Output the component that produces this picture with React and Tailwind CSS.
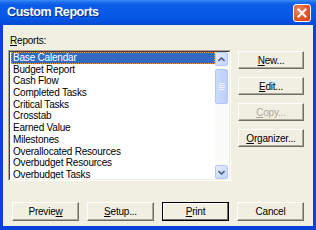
import React from "react";

const reports = [
  "Base Calendar",
  "Budget Report",
  "Cash Flow",
  "Completed Tasks",
  "Critical Tasks",
  "Crosstab",
  "Earned Value",
  "Milestones",
  "Overallocated Resources",
  "Overbudget Resources",
  "Overbudget Tasks",
];

export default function App() {
  return (
    <div className="w-[316px] h-[230px] flex flex-col bg-[#0842d8] font-['Liberation_Sans',Arial,sans-serif] text-[10px] tracking-[-0.2px] text-black overflow-hidden">
      {/* TITLE BAR */}
      <div className="h-[25px] flex items-center pl-[7px] pr-[5px] bg-[linear-gradient(180deg,#3b8cf5_0px,#1f70ee_2px,#0a5ce8_5px,#0758e6_18px,#0648d6_25px)]">
        <span className="flex-1 text-white font-bold text-[12.5px] tracking-[-0.4px] [text-shadow:1px_1px_#0a2a8a]">
          Custom Reports
        </span>
        <CloseBtn />
      </div>

      {/* BODY */}
      <div className="flex-1 mx-[3px] mb-[4px] bg-[#f1efe2] pl-[5px] pt-[10px]">
        <div className="h-[12px] leading-[12px] pl-[2px]">
          <u>R</u>eports:
        </div>

        <div className="flex mt-[3px]">
          <ListBox />
          <div className="ml-[7px] mt-[1px] flex flex-col gap-[8px]">
            <Btn w="w-[66px]" h="h-[18px]"><u>N</u>ew...</Btn>
            <Btn w="w-[66px]" h="h-[18px]"><u>E</u>dit...</Btn>
            <Btn w="w-[66px]" h="h-[18px]" disabled><u>C</u>opy...</Btn>
            <Btn w="w-[66px]" h="h-[18px]"><u>O</u>rganizer...</Btn>
          </div>
        </div>

        <div className="flex gap-[8px] mt-[21px] ml-[4px]">
          <Btn w="w-[67px]" h="h-[19px]">Previe<u>w</u></Btn>
          <Btn w="w-[67px]" h="h-[19px]"><u>S</u>etup...</Btn>
          <Btn w="w-[67px]" h="h-[19px]" def><u>P</u>rint</Btn>
          <Btn w="w-[67px]" h="h-[19px]">Cancel</Btn>
        </div>
      </div>
    </div>
  );
}

/* ================== UI HELPERS ================== */

function CloseBtn() {
  return (
    <div className="w-[18px] h-[18px] mt-[1px] rounded-[3px] border border-white bg-[radial-gradient(circle_at_30%_30%,#f08a5f,#e0562c_55%,#c8401c)] flex items-center justify-center">
      <svg width="10" height="10" viewBox="0 0 10 10">
        <path d="M1.5 1.5 L8.5 8.5 M8.5 1.5 L1.5 8.5" stroke="white" strokeWidth="2" strokeLinecap="square" />
      </svg>
    </div>
  );
}

function ListBox() {
  return (
    <div className="w-[223px] h-[131px] border border-t-[#aca899] border-l-[#aca899] border-r-white border-b-white">
      <div className="w-full h-full border border-t-[#404040] border-l-[#404040] border-r-[#f1efe2] border-b-[#f1efe2] bg-white flex">
        <div className="flex-1 pl-[1px] overflow-hidden">
          {reports.map((r, i) => (
            <div
              key={r}
              className={
                i === 0
                  ? "h-[11.7px] leading-[11.7px] pl-[2px] bg-[#316ac5] text-white outline outline-1 outline-dotted outline-[#e0a040] -outline-offset-1"
                  : "h-[11.7px] leading-[11.7px] pl-[2px] whitespace-nowrap"
              }
            >
              {r}
            </div>
          ))}
        </div>
        <ScrollBar />
      </div>
    </div>
  );
}

function ScrollBar() {
  return (
    <div className="w-[14px] h-full bg-[#fbfbf8] flex flex-col pr-[1px]">
      <Arrow up />
      <div className="mt-[3px] h-[35px] rounded-[2px] border border-[#b4c8f6] bg-[linear-gradient(90deg,#cbdafc,#bccffa)] flex flex-col items-center justify-center gap-[1px]">
        <div className="w-[6px] h-[1px] bg-[#eef3ff]" />
        <div className="w-[6px] h-[1px] bg-[#eef3ff]" />
        <div className="w-[6px] h-[1px] bg-[#eef3ff]" />
        <div className="w-[6px] h-[1px] bg-[#eef3ff]" />
      </div>
      <div className="flex-1" />
      <Arrow />
    </div>
  );
}

function Arrow({ up }) {
  return (
    <div className="h-[14px] rounded-[2px] border border-[#b4c8f6] bg-[linear-gradient(135deg,#e4ecfe,#c1d3fb)] flex items-center justify-center">
      <svg width="7" height="5" viewBox="0 0 7 5">
        <path
          d={up ? "M0.5 4 L3.5 1 L6.5 4" : "M0.5 1 L3.5 4 L6.5 1"}
          stroke="#4d6185"
          strokeWidth="1.6"
          fill="none"
        />
      </svg>
    </div>
  );
}

function Btn({ children, w, h, disabled, def }) {
  const base =
    "flex items-center justify-center bg-[#f1efe2] whitespace-nowrap " + w + " " + h;
  if (def) {
    return (
      <div className={base + " border border-black shadow-[inset_-1px_-1px_#716f64,inset_1px_1px_white]"}>
        {children}
      </div>
    );
  }
  return (
    <div
      className={
        base +
        " border border-t-white border-l-white border-r-[#716f64] border-b-[#716f64] shadow-[inset_-1px_-1px_#aca899] " +
        (disabled ? "text-[#aca899]" : "")
      }
    >
      {children}
    </div>
  );
}
